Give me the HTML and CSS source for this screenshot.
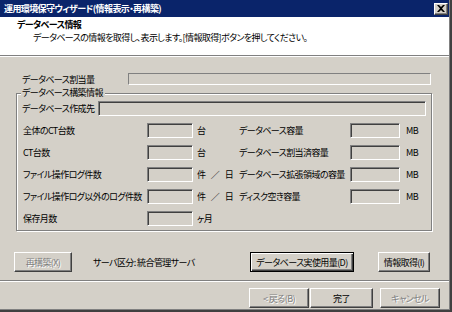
FILE: index.html
```html
<!DOCTYPE html>
<html lang="ja">
<head>
    <meta charset="UTF-8">
    <title>運用環境保守ウィザード</title>
    <link rel="stylesheet" href="styles.css">
</head>
<body>
    <div class="window">
        <div class="client">
            <div class="titlebar">
                <span class="title-text">運用環境保守ウィザード(情報表示・再構築)</span>
                <button class="close-btn" title="閉じる">
                    <svg width="8" height="7" viewBox="0 0 8 7">
                        <path d="M0 0h2l2 2 2-2h2L5 3.5 8 7H6L4 5 2 7H0l3-3.5z" fill="#000"/>
                    </svg>
                </button>
            </div>
            <header class="header">
                <p class="header-title">データベース情報</p>
                <p class="header-sub">データベースの情報を取得し、表示します。[情報取得]ボタンを押してください。</p>
            </header>
            <main class="main">
                <div class="quota-row">
                    <span class="quota-label">データベース割当量</span>
                    <div class="quota-bar"></div>
                </div>
                <div class="group">
                    <span class="group-title">データベース構築情報</span>
                    <div class="dest-row">
                        <span class="dest-label">データベース作成先</span>
                        <div class="field dest-field"></div>
                    </div>
                    <div class="stats">
                        <span>全体のCT台数</span><div class="field"></div><span class="unit">台</span>
                        <span>データベース容量</span><div class="field"></div><span class="unit mb">MB</span>

                        <span>CT台数</span><div class="field"></div><span class="unit">台</span>
                        <span>データベース割当済容量</span><div class="field"></div><span class="unit mb">MB</span>

                        <span>ファイル操作ログ件数</span><div class="field"></div><span class="unit">件 ／ 日</span>
                        <span>データベース拡張領域の容量</span><div class="field"></div><span class="unit mb">MB</span>

                        <span>ファイル操作ログ以外のログ件数</span><div class="field"></div><span class="unit">件 ／ 日</span>
                        <span>ディスク空き容量</span><div class="field"></div><span class="unit mb">MB</span>

                        <span>保存月数</span><div class="field"></div><span class="unit">ヶ月</span>
                    </div>
                </div>
                <div class="actions">
                    <button class="btn btn-rebuild" disabled>再構築(X)</button>
                    <span class="server-type">サーバ区分: 統合管理サーバ</span>
                    <button class="btn btn-default btn-usage">データベース実使用量(D)</button>
                    <button class="btn btn-fetch">情報取得(I)</button>
                </div>
            </main>
            <footer class="footer">
                <button class="btn btn-nav" disabled>&lt; 戻る(B)</button>
                <button class="btn btn-nav btn-finish">完了</button>
                <button class="btn btn-nav btn-cancel" disabled>キャンセル</button>
            </footer>
        </div>
    </div>
</body>
</html>
```

FILE: styles.css
```css
* {
    margin: 0;
    padding: 0;
    box-sizing: border-box;
}
body {
    background: #d4d0c8;
    font-family: "Noto Sans CJK JP", "Noto Sans", sans-serif;
    font-size: 9px;
    line-height: 13px;
    letter-spacing: -0.6px;
    font-feature-settings: "palt";
    white-space: nowrap;
    color: #000;
}
.window {
    width: 452px;
    height: 312px;
    border-right: 2px solid #404040;
    border-bottom: 2px solid #404040;
}
.client {
    height: 100%;
    display: flex;
    flex-direction: column;
    border-right: 1px solid #808080;
    border-bottom: 1px solid #808080;
}

/* заголовок окна */
.titlebar {
    flex-shrink: 0;
    height: 17px;
    background: #0a246a;
    color: #fff;
    display: flex;
    align-items: center;
    padding: 0 1px 0 4px;
}
.title-text {
    flex: 1;
    font-weight: bold;
}
.close-btn {
    width: 14px;
    height: 12px;
    display: flex;
    align-items: center;
    justify-content: center;
    background: #d4d0c8;
    border: 1px solid;
    border-color: #fff #404040 #404040 #fff;
    box-shadow: inset -1px -1px #808080;
}

.header {
    flex-shrink: 0;
    height: 39px;
    background: #fff;
    border-bottom: 1px solid #808080;
    padding: 1px 0 0 17px;
}
.header-title {
    font-weight: bold;
}
.header-sub {
    padding-left: 16px;
}

.main {
    flex: 1;
    min-height: 0;
    border-top: 1px solid #fff;
}
.quota-row {
    display: flex;
    align-items: center;
    height: 12px;
    margin: 16px 18px 0 22px;
}
.quota-label {
    width: 106px;
}
.quota-bar {
    flex: 1;
    height: 12px;
    border: 1px solid;
    border-color: #808080 #fff #fff #808080;
}

/* групповая рамка */
.group {
    margin: 8px 17px 0 16px;
    border: 1px solid #808080;
    box-shadow: 1px 1px 0 #fff, inset 1px 1px 0 #fff;
    padding-bottom: 4px;
}
.group-title {
    display: block;
    width: fit-content;
    margin: -8px 0 0 4px;
    padding: 0 2px 0 1px;
    background: #d4d0c8;
}
.dest-row {
    display: flex;
    align-items: center;
    margin: 2px 5px 0 5px;
}
.dest-label {
    width: 76px;
}
.field {
    height: 15px;
    border: 1px solid;
    border-color: #808080 #fff #fff #808080;
    box-shadow: inset 1px 1px #404040, inset -1px -1px #d4d0c8;
}
.dest-field {
    flex: 1;
}
.stats {
    display: grid;
    grid-template-columns: 124px 46px 46px 111px 50px auto;
    grid-auto-rows: 15px;
    row-gap: 7px;
    align-items: center;
    margin: 7px 0 0 6px;
}
.unit {
    padding-left: 4px;
    word-spacing: 4px;
}
.unit.mb {
    padding-left: 6px;
}

.actions {
    display: flex;
    align-items: center;
    margin: 21px 19px 0 14px;
}
.server-type {
    flex: 1;
    margin-left: 21px;
}

/* кнопки */
.btn {
    height: 20px;
    font: inherit;
    letter-spacing: inherit;
    font-feature-settings: "palt";
    color: #000;
    background: #d4d0c8;
    border: 1px solid;
    border-color: #fff #404040 #404040 #fff;
    box-shadow: inset -1px -1px #808080;
}
.btn:disabled {
    color: #808080;
    text-shadow: 1px 1px #fff;
}
.btn-default {
    border-color: #000;
    box-shadow: inset 1px 1px #fff, inset -1px -1px #404040, inset -2px -2px #808080;
}
.btn-rebuild {
    width: 58px;
}
.btn-usage {
    width: 104px;
}
.btn-fetch {
    width: 52px;
    margin-left: 24px;
}

.footer {
    flex-shrink: 0;
    height: 29px;
    border-top: 1px solid #808080;
    box-shadow: inset 0 1px #fff;
    display: flex;
    justify-content: flex-end;
    padding: 7px 9px 0 0;
}
.btn-nav {
    width: 60px;
}
.btn-finish {
    width: 63px;
    margin-left: 1px;
}
.btn-cancel {
    margin-left: 7px;
}
```
